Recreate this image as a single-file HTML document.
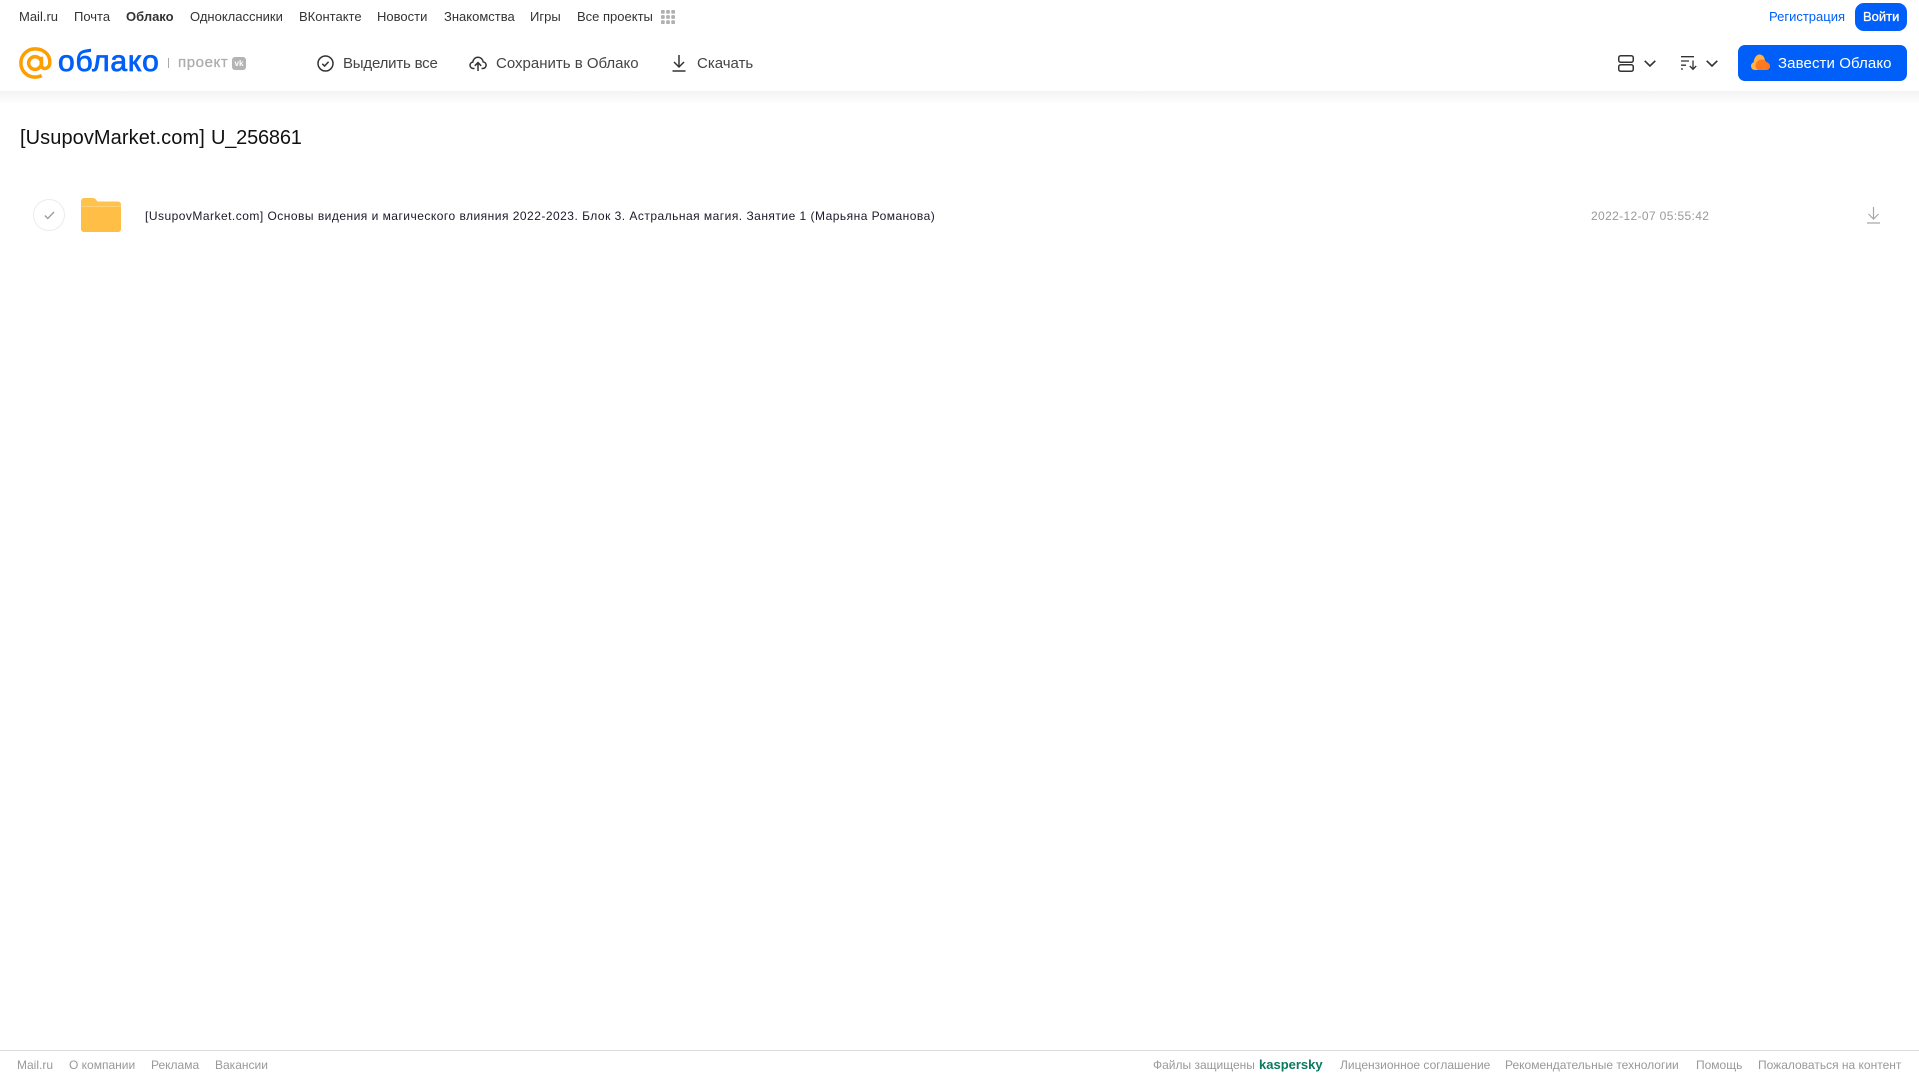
<!DOCTYPE html>
<html lang="ru"><head><meta charset="utf-8"><title>Облако</title>
<style>
html,body{margin:0;padding:0;width:1919px;height:1079px;overflow:hidden;background:#fff;font-family:"Liberation Sans",Arial,sans-serif}
.t{position:absolute;white-space:nowrap;line-height:16px}
.n{top:9px;font-size:13px;color:#333}
.a{top:54.500px;font-size:15px;color:#444;line-height:18px}
.f{top:1057px;font-size:12px;color:#999}
svg{position:absolute;overflow:visible}
#shadow{position:absolute;left:0;top:91px;width:1919px;height:14px;background:linear-gradient(#f4f4f4,#fff)}
#fl{position:absolute;left:0;top:1050px;width:1919px;height:1px;background:#dcdcdc}
</style></head><body>
<div id="shadow"></div>
<span class="t n" style="left:19px">Mail.ru</span>
<span class="t n" style="left:74px">Почта</span>
<span class="t n" style="left:126px;font-weight:bold">Облако</span>
<span class="t n" style="left:190px">Одноклассники</span>
<span class="t n" style="left:299px">ВКонтакте</span>
<span class="t n" style="left:377px">Новости</span>
<span class="t n" style="left:444px">Знакомства</span>
<span class="t n" style="left:530px">Игры</span>
<span class="t n" style="left:577px">Все проекты</span>
<svg style="left:661px;top:10px" width="14" height="14" viewBox="0 0 15 15" fill="#b0b0b0"><rect x="0" y="0" width="4" height="4" rx="1"/><rect x="5.5" y="0" width="4" height="4" rx="1"/><rect x="11" y="0" width="4" height="4" rx="1"/><rect x="0" y="5.5" width="4" height="4" rx="1"/><rect x="5.5" y="5.5" width="4" height="4" rx="1"/><rect x="11" y="5.5" width="4" height="4" rx="1"/><rect x="0" y="11" width="4" height="4" rx="1"/><rect x="5.5" y="11" width="4" height="4" rx="1"/><rect x="11" y="11" width="4" height="4" rx="1"/></svg>
<span class="t n" style="left:1769px;color:#005ff9">Регистрация</span>
<div style="position:absolute;left:1855px;top:3px;width:52px;height:28px;border-radius:9px;background:#005ff9"></div>
<span class="t n" style="left:1863px;color:#fff;font-size:13px;-webkit-text-stroke:.3px #fff">Войти</span>

<svg style="left:19px;top:47px" width="33" height="32" viewBox="0 0 34 33" fill="none" stroke="#ff9e00" stroke-width="3.6"><circle cx="16.5" cy="16.5" r="6.6"/><path d="M23.1 10v8.5c0 5.2 7.9 5 8.6-1.5C32.6 8 25.500 1.900 16.500 1.900 8.400 1.900 1.900 8.400 1.900 16.500s6.500 14.600 14.600 14.600c2.700 0 4.700-.5 6.900-1.700"/></svg>
<span class="t" style="left:58px;top:44px;font-size:30px;line-height:36px;color:#005ff9;-webkit-text-stroke:.8px #005ff9;letter-spacing:.8px">облако</span>
<div style="position:absolute;left:168px;top:58px;width:1px;height:10px;background:#aaa"></div>
<span class="t" style="left:178px;top:54px;font-size:15px;line-height:17px;color:#adadad;-webkit-text-stroke:.3px #adadad;letter-spacing:.6px">проект</span>
<div style="position:absolute;left:232px;top:57px;width:14px;height:13px;border-radius:3px;background:#b4b4b4;color:#fff;font-size:8px;line-height:13px;text-align:center;font-weight:bold">vk</div>

<svg style="left:317px;top:55px" width="17" height="17" viewBox="0 0 17 17" fill="none" stroke="#333" stroke-width="1.500"><circle cx="8.500" cy="8.500" r="7.500"/><path d="M5.300 8.800l2.300 2.200 4-4.300"/></svg>
<span class="t a" style="left:343px;letter-spacing:-.2px">Выделить все</span>
<svg style="left:469px;top:54px" width="18" height="18" viewBox="0 0 18 18" fill="none" stroke="#333" stroke-width="1.500"><path d="M5.500 14.500H4.200C2.300 14.500 1 13 1 11.300c0-1.700 1.200-3 2.800-3.200C4.200 5.300 6.300 3.200 9 3.200c2.600 0 4.800 2 5.200 4.700 1.700.2 2.900 1.700 2.900 3.400 0 1.700-1.400 3.200-3.300 3.200h-1.300"/><path d="M9 17V9M5.800 11.800L9 8.600l3.200 3.200"/></svg>
<span class="t a" style="left:496px">Сохранить в Облако</span>
<svg style="left:672px;top:54px" width="14" height="18" viewBox="0 0 14 18" fill="none" stroke="#333" stroke-width="1.500"><path d="M7 1v11.500M2 8l5 5 5-5M.5 17h13"/></svg>
<span class="t a" style="left:697px">Скачать</span>

<svg style="left:1618px;top:55px" width="16" height="17" viewBox="0 0 16 17" fill="none" stroke="#333" stroke-width="1.500"><rect x=".75" y=".75" width="14.500" height="6.500" rx="2"/><rect x=".75" y="9.750" width="14.500" height="6.500" rx="2"/></svg>
<svg style="left:1644px;top:60px" width="12" height="7" fill="none" stroke="#333" stroke-width="1.600"><path d="M.7.800L6 6l5.300-5.200"/></svg>
<svg style="left:1681px;top:56px" width="17" height="14" viewBox="0 0 17 14" fill="none" stroke="#333" stroke-width="1.300"><path d="M0 .700h13M0 5h8M0 9.200h5M0 13h2M12 4.500V13M8.800 10l3.200 3.300 3.200-3.300"/></svg>
<svg style="left:1706px;top:60px" width="12" height="7" fill="none" stroke="#333" stroke-width="1.600"><path d="M.7.800L6 6l5.300-5.200"/></svg>

<div style="position:absolute;left:1738px;top:45px;width:169px;height:36px;border-radius:7px;background:#005ff9"></div>
<svg style="left:1751px;top:54px" width="19" height="16" viewBox="0 0 19 16"><path d="M4 16C1.500 16 0 14.200 0 12c0-1.800 1.100-3.300 2.700-3.800C3 4 5.500.5 8.500.5c2.700 0 4.700 2.200 5.200 4.700L14 16z" fill="#ffb347"/><path d="M7 16c-1.700-.9-2.500-2.600-2.500-4.200C4.500 8.500 7 6 10 5.500c2-.3 4.700.8 5.700 2.700C17.700 8.700 19 10.200 19 12.200 19 14.500 17.200 16 15 16z" fill="#ff7a1f"/></svg>
<span class="t a" style="left:1778px;color:#fff;letter-spacing:.1px">Завести Облако</span>

<span class="t" style="left:20px;top:126px;font-size:20px;line-height:24px;color:#111;letter-spacing:.08px">[UsupovMarket.com]</span>
<span class="t" style="left:211px;top:126px;font-size:20px;line-height:24px;color:#111;letter-spacing:-.2px">U_256861</span>

<div style="position:absolute;left:33px;top:199px;width:30px;height:30px;border:1px solid #ececec;border-radius:50%"></div>
<svg style="left:43.500px;top:210.500px" width="11" height="9" fill="none" stroke="#999" stroke-width="1.300"><path d="M.8 4.500l3 3L10 1"/></svg>
<svg style="left:81px;top:198px" width="40" height="34" viewBox="0 0 40 34"><path d="M0 3a3 3 0 0 1 3-3h9c2 0 3 1.500 4.500 3.500H37a3 3 0 0 1 3 3V31a3 3 0 0 1-3 3H3a3 3 0 0 1-3-3z" fill="#ffc24d"/><path d="M0 8.500h40V31a3 3 0 0 1-3 3H3a3 3 0 0 1-3-3z" fill="#ffbe45"/><path d="M0 8h40v1H0z" fill="#ffd27a"/></svg>
<span class="t" style="left:145px;top:207.500px;font-size:12px;color:#1a1a2a;letter-spacing:.48px">[UsupovMarket.com] Основы видения и магического влияния 2022-2023. Блок 3. Астральная магия. Занятие 1 (Марьяна Романова)</span>
<span class="t" style="left:1591px;top:207.500px;font-size:12px;color:#999;letter-spacing:.36px">2022-12-07 05:55:42</span>
<svg style="left:1867px;top:207px" width="13" height="17" viewBox="0 0 13 17" fill="none" stroke="#a8a8a8" stroke-width="1.200"><path d="M6.500 0v11.500M1.500 7l5 5 5-5M0 16h13"/></svg>

<div id="fl"></div>
<span class="t f" style="left:17px">Mail.ru</span>
<span class="t f" style="left:69px">О компании</span>
<span class="t f" style="left:151px">Реклама</span>
<span class="t f" style="left:215px">Вакансии</span>
<span class="t f" style="left:1153px">Файлы защищены</span>
<span class="t f" style="left:1259px;color:#0a7a5f;font-weight:bold;font-size:13px">kaspersky</span>
<span class="t f" style="left:1340px">Лицензионное соглашение</span>
<span class="t f" style="left:1505px">Рекомендательные технологии</span>
<span class="t f" style="left:1696px">Помощь</span>
<span class="t f" style="left:1758px">Пожаловаться на контент</span>
</body></html>
